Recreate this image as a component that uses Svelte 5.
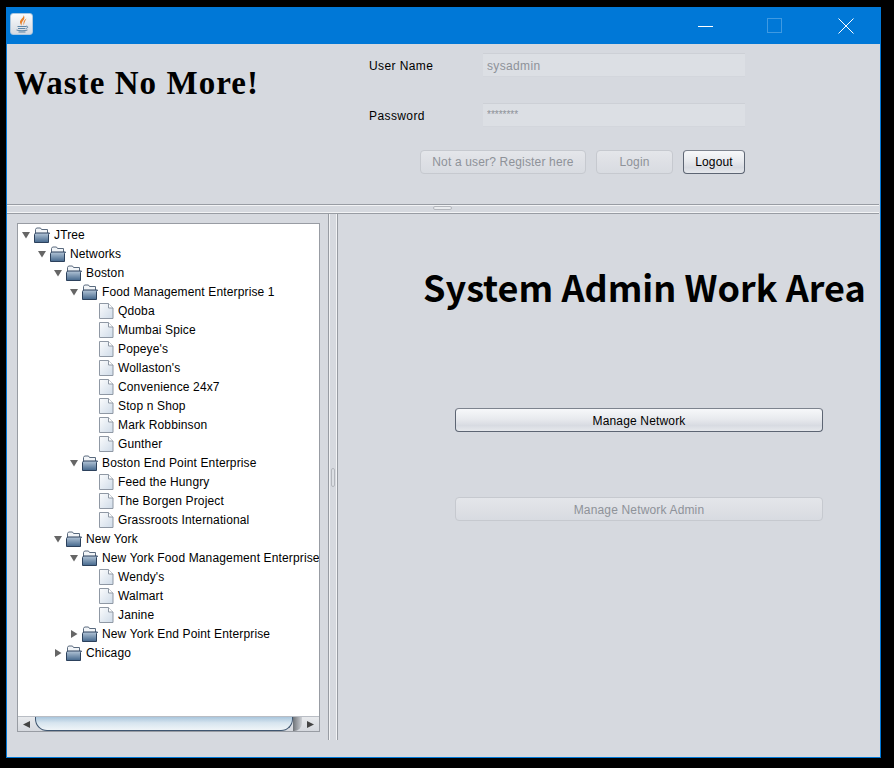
<script>
  const tree = [
    { label: 'JTree', depth: 0, type: 'open' },
    { label: 'Networks', depth: 1, type: 'open' },
    { label: 'Boston', depth: 2, type: 'open' },
    { label: 'Food Management Enterprise 1', depth: 3, type: 'open' },
    { label: 'Qdoba', depth: 4, type: 'leaf' },
    { label: 'Mumbai Spice', depth: 4, type: 'leaf' },
    { label: "Popeye's", depth: 4, type: 'leaf' },
    { label: "Wollaston's", depth: 4, type: 'leaf' },
    { label: 'Convenience 24x7', depth: 4, type: 'leaf' },
    { label: 'Stop n Shop', depth: 4, type: 'leaf' },
    { label: 'Mark Robbinson', depth: 4, type: 'leaf' },
    { label: 'Gunther', depth: 4, type: 'leaf' },
    { label: 'Boston End Point Enterprise', depth: 3, type: 'open' },
    { label: 'Feed the Hungry', depth: 4, type: 'leaf' },
    { label: 'The Borgen Project', depth: 4, type: 'leaf' },
    { label: 'Grassroots International', depth: 4, type: 'leaf' },
    { label: 'New York', depth: 2, type: 'open' },
    { label: 'New York Food Management Enterprise', depth: 3, type: 'open' },
    { label: "Wendy's", depth: 4, type: 'leaf' },
    { label: 'Walmart', depth: 4, type: 'leaf' },
    { label: 'Janine', depth: 4, type: 'leaf' },
    { label: 'New York End Point Enterprise', depth: 3, type: 'closed' },
    { label: 'Chicago', depth: 2, type: 'closed' }
  ];
</script>

<div class="screen">
  <div class="window">
    <header class="titlebar">
      <div class="app-icon">
        <svg width="18" height="18" viewBox="0 0 18 18">
          <path d="M10.500 0C11.500 2.500 6.500 4.500 7 7.500c.2 1.200 1 2 1.300 3.200C8.800 9 8.500 7.500 10 5.800 11.500 4.200 12 2 10.500 0z" fill="#e8812a"/>
          <path d="M13.500 3.500C11 5 9.800 7 10.800 10.500c.5-2.600 1.200-4.800 2.700-7z" fill="#e8812a"/>
          <path d="M4.500 11.500h8.500M5 13.500h7" stroke="#5d86a8" stroke-width="1" fill="none"/>
          <path d="M13 11.200c2.400-.3 2.400 2-.5 2.400" stroke="#5d86a8" stroke-width="1" fill="none"/>
          <path d="M3.500 15c2.500 1 8.500 1 11 0M5.500 17h7" stroke="#5d86a8" stroke-width="1" fill="none"/>
        </svg>
      </div>
      <div class="controls">
        <span class="ctl"><svg width="16" height="16" viewBox="0 0 16 16"><path d="M0 8.500h15" stroke="#fff" fill="none"/></svg></span>
        <span class="ctl max"><svg width="16" height="16" viewBox="0 0 16 16"><rect x="0.500" y="0.500" width="14" height="14" stroke="#3f9ae2" fill="none"/></svg></span>
        <span class="ctl"><svg width="16" height="16" viewBox="0 0 16 16"><path d="M0.500 0.500l15 15M15.500 0.500l-15 15" stroke="#fff" fill="none"/></svg></span>
      </div>
    </header>

    <section class="top-pane">
      <h1 class="brand">Waste No More!</h1>
      <form class="login">
        <label for="user">User Name</label>
        <input id="user" type="text" value="sysadmin" disabled />
        <label for="pass">Password</label>
        <input id="pass" class="pass" type="text" value="********" disabled />
        <div class="actions">
          <button type="button" class="btn" disabled>Not a user? Register here</button>
          <button type="button" class="btn login-btn" disabled>Login</button>
          <button type="button" class="btn logout-btn">Logout</button>
        </div>
      </form>
    </section>

    <div class="h-divider"><span class="h-grip"></span></div>

    <section class="bottom-pane">
      <aside class="left">
        <div class="scroll-box">
          <div class="tree">
            {#each tree as node}
              <div class="row" style="padding-left: {node.depth * 16}px">
                <span class="arrow">
                  {#if node.type === 'open'}
                    <svg width="8" height="8" viewBox="0 0 8 8"><path d="M0 1h8L4 7.500z" fill="#666"/></svg>
                  {:else if node.type === 'closed'}
                    <svg width="8" height="8" viewBox="0 0 8 8"><path d="M1 0v8l6.500-4z" fill="#666"/></svg>
                  {/if}
                </span>
                {#if node.type === 'leaf'}
                  <svg class="doc" width="15" height="16" viewBox="0 0 15 16">
                    <defs>
                      <linearGradient id="docfill" x1="0" y1="0" x2="1" y2="1">
                        <stop offset="0" stop-color="#fbfcfd"/>
                        <stop offset="1" stop-color="#cfdbe8"/>
                      </linearGradient>
                    </defs>
                    <path d="M0.500 0.500h9l4.500 4.500v10.500h-13.500z" fill="url(#docfill)" stroke="#8f98a4"/>
                    <path d="M9.500 0.500v4.500h4.500" fill="#fff" stroke="#8f98a4"/>
                  </svg>
                {:else}
                  <svg class="folder" width="17" height="16" viewBox="0 0 17 16">
                    <defs>
                      <linearGradient id="foldfill" x1="0" y1="0" x2="0" y2="1">
                        <stop offset="0" stop-color="#b4c6d8"/>
                        <stop offset="1" stop-color="#44678c"/>
                      </linearGradient>
                    </defs>
                    <path d="M2.500 13V2.500l1-1.500h4l1 1.500h6V6" fill="#f2f5f8" stroke="#5a6a7e"/>
                    <path d="M1.500 15.500V7.500l1-1.500h14l-1 1.500v8z" fill="url(#foldfill)" stroke="#2c415c"/>
                  </svg>
                {/if}
                <span class="label">{node.label}</span>
              </div>
            {/each}
          </div>
          <div class="hscroll">
            <span class="sb-arrow"><svg width="9" height="9" viewBox="0 0 9 9"><path d="M8 1v7L1 4.500z" fill="#444"/></svg></span>
            <div class="track">
              <div class="thumb"></div>
              <div class="thumb-shadow"></div>
            </div>
            <span class="sb-arrow"><svg width="9" height="9" viewBox="0 0 9 9"><path d="M1 1v7l7-3.500z" fill="#444"/></svg></span>
          </div>
        </div>
      </aside>

      <div class="v-divider"><span class="v-grip"></span></div>

      <main class="work">
        <h2>System Admin Work Area</h2>
        <button type="button" class="btn wide first">Manage Network</button>
        <button type="button" class="btn wide" disabled>Manage Network Admin</button>
      </main>
    </section>
  </div>
</div>

<style>
  :global(body) {
    margin: 0;
    background: #000;
  }

  .screen {
    width: 894px;
    height: 768px;
    padding: 7px 13px 10px 6px;
    box-sizing: border-box;
    background: #000;
    font-family: "Liberation Sans", Arial, sans-serif;
    font-size: 12px;
    color: #000;
  }

  .window {
    height: 751px;
    display: flex;
    flex-direction: column;
    background: #d6d9df;
    border: solid #0078d7;
    border-width: 0 1px 1px 1px;
    box-sizing: border-box;
  }

  .titlebar {
    flex: none;
    height: 37px;
    margin: 0 -1px;
    padding: 6px 27px 0 4px;
    box-sizing: border-box;
    background: #0078d7;
    display: flex;
    justify-content: space-between;
  }

  .app-icon {
    width: 23px;
    height: 22px;
    border: 1px solid #a9c6e0;
    border-radius: 3px;
    box-sizing: border-box;
    background: linear-gradient(#fafbfc, #d5dae1);
    display: flex;
    align-items: center;
    justify-content: center;
  }

  .controls {
    display: flex;
    gap: 54px;
    padding-top: 5px;
  }

  .ctl {
    display: block;
    width: 16px;
    height: 16px;
  }

  .ctl.max {
    margin: 0 1px 0 -1px;
  }

  .top-pane {
    flex: none;
    height: 160px;
    display: flex;
    box-sizing: border-box;
  }

  .brand {
    width: 362px;
    margin: 0;
    padding: 19px 0 0 7px;
    box-sizing: border-box;
    font-family: "Liberation Serif", "Times New Roman", serif;
    font-size: 33px;
    line-height: 40px;
    letter-spacing: 1.05px;
    font-weight: bold;
    white-space: nowrap;
  }

  .login {
    width: 376px;
    padding-top: 9px;
    display: grid;
    grid-template-columns: 114px 262px;
    grid-auto-rows: 24px;
    row-gap: 26px;
    align-items: center;
    align-content: start;
  }

  .login label {
    padding-top: 2px;
    font-size: 12px;
    letter-spacing: 0.4px;
  }

  .login input {
    height: 24px;
    width: 100%;
    padding: 2px 4px 0;
    box-sizing: border-box;
    border: none;
    border-top: 1px solid #cdd0d6;
    border-bottom: 1px solid #d3d6dc;
    background: #dcdfe4;
    color: #8e9299;
    font: 12px "Liberation Sans", Arial, sans-serif;
    letter-spacing: 0.35px;
  }

  .login input.pass {
    padding: 0 4px 2px;
    font-size: 10px;
    letter-spacing: 0;
  }

  .actions {
    grid-column: 1 / 3;
    margin-top: -6px;
    display: flex;
    justify-content: flex-end;
    gap: 10px;
  }

  .btn {
    height: 24px;
    width: 166px;
    padding: 0;
    border: 1px solid #5d6573;
    border-top-color: #7d838e;
    border-radius: 4px;
    background: linear-gradient(#f7f8fa 0%, #e8eaee 45%, #d8dbe2 75%, #e6e8ec 100%);
    font: 12px "Liberation Sans", Arial, sans-serif;
    letter-spacing: 0.16px;
    color: #000;
  }

  .btn:disabled {
    border-color: #c6c9cf;
    background: linear-gradient(#e4e6ea 0%, #dee0e5 50%, #d8dbe1 100%);
    color: #8e9299;
  }

  .login-btn {
    width: 77px;
  }

  .logout-btn {
    width: 62px;
  }

  .h-divider {
    flex: none;
    height: 10px;
    border-top: 1px solid #989ca3;
    border-bottom: 1px solid #989ca3;
    box-shadow: inset 0 1px 0 #f2f3f5, inset 0 -1px 0 #f2f3f5;
    box-sizing: border-box;
    margin: 0 1px 0 0;
    display: flex;
    justify-content: center;
  }

  .h-grip {
    width: 19px;
    height: 4px;
    margin: 1px 0 0 -1px;
    border: 1px solid #b3b6bc;
    border-radius: 2px;
    background: #e9ebee;
    box-sizing: border-box;
  }

  .bottom-pane {
    flex: none;
    height: 526px;
    display: flex;
  }

  .left {
    width: 321px;
    flex: none;
    padding: 9px 0 8px 10px;
    box-sizing: border-box;
  }

  .scroll-box {
    width: 303px;
    height: 509px;
    border: 1px solid #989ca3;
    box-sizing: border-box;
    background: #fff;
    display: flex;
    flex-direction: column;
    overflow: hidden;
  }

  .tree {
    flex: 1;
    padding-top: 1px;
    overflow: hidden;
  }

  .row {
    height: 19px;
    display: flex;
    align-items: center;
    white-space: nowrap;
  }

  .arrow {
    width: 15px;
    flex: none;
    display: flex;
    justify-content: center;
    box-sizing: border-box;
  }

  .folder {
    flex: none;
    margin-right: 4px;
  }

  .doc {
    flex: none;
    margin: 0 4px 0 2px;
  }

  .label {
    color: #000;
    letter-spacing: 0.14px;
  }

  .hscroll {
    flex: none;
    height: 15px;
    display: flex;
    align-items: center;
    border-top: 1px solid #b9bdc4;
    background: linear-gradient(#e8eaed, #d6d9df);
    box-sizing: border-box;
  }

  .sb-arrow {
    width: 17px;
    flex: none;
    display: flex;
    justify-content: center;
  }

  .track {
    flex: 1;
    height: 100%;
    display: flex;
  }

  .thumb {
    width: 258px;
    height: 100%;
    box-sizing: border-box;
    border: 1px solid #3f5670;
    border-top: none;
    border-radius: 0 0 12px 12px;
    background: linear-gradient(#a9c5dc 0%, #d7e5ef 45%, #f0f5f8 100%);
  }

  .thumb-shadow {
    width: 9px;
    height: 100%;
    background: linear-gradient(90deg, #6f7378, #cdd0d5);
    border-radius: 0 0 8px 0;
  }

  .v-divider {
    width: 10px;
    flex: none;
    border-left: 1px solid #989ca3;
    border-right: 1px solid #989ca3;
    box-shadow: inset 1px 0 0 #f2f3f5, inset -1px 0 0 #f2f3f5;
    box-sizing: border-box;
    display: flex;
    align-items: center;
    justify-content: center;
  }

  .v-grip {
    width: 4px;
    height: 19px;
    border: 1px solid #b3b6bc;
    border-radius: 2px;
    background: #dcdfe4;
    box-sizing: border-box;
  }

  .work {
    flex: 1;
    padding: 47px 0 0 85px;
    display: flex;
    flex-direction: column;
    align-items: flex-start;
    min-width: 0;
  }

  .work h2 {
    margin: 0;
    font-family: "Noto Sans CJK JP", "Noto Sans", sans-serif;
    font-size: 36px;
    line-height: 50px;
    font-weight: 700;
    white-space: nowrap;
  }

  .wide {
    width: 368px;
    margin-left: 32px;
    padding-top: 2px;
  }

  .first {
    margin-top: 97px;
    margin-bottom: 65px;
  }
</style>
